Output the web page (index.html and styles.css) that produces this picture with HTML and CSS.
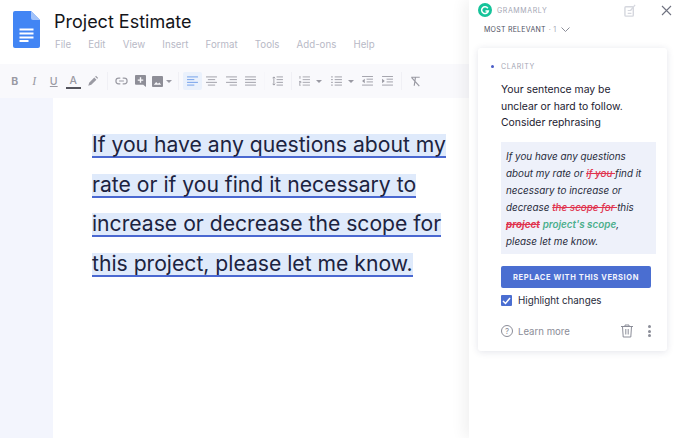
FILE: index.html
```html
<!DOCTYPE html>
<html lang="en">
<head>
<meta charset="utf-8">
<title>Project Estimate</title>
<link rel="stylesheet" href="styles.css">
</head>
<body>
<div class="app">
  <main class="editor">
    <header class="head">
      <svg class="doc-icon" width="27" height="37" viewBox="0 0 27 37"><path d="M2 0h16l9 9v26a2 2 0 0 1-2 2H2a2 2 0 0 1-2-2V2a2 2 0 0 1 2-2z" fill="#4285f4"/><path d="M18 0l9 9h-7a2 2 0 0 1-2-2z" fill="#a1c2fa"/><path d="M6.500 18.500h14M6.500 22.500h14M6.500 26.500h14M6.500 30h9" stroke="#fff" stroke-width="1.800" fill="none"/></svg>
      <div class="head-text">
        <h1 class="title">Project Estimate</h1>
        <nav class="menu"><span>File</span><span>Edit</span><span>View</span><span>Insert</span><span>Format</span><span>Tools</span><span>Add-ons</span><span>Help</span></nav>
      </div>
    </header>
    <div class="toolbar">
      <div class="group">
        <span class="tool glyph bold">B</span>
        <span class="tool glyph italic">I</span>
        <span class="tool glyph underline">U</span>
        <span class="tool glyph color">A</span>
        <span class="tool"><svg width="12" height="12" viewBox="0 0 14 14"><path d="M1.500 12.500l1-3.500 6-6 2.500 2.500-6 6zM9.500 2l1-1 2.500 2.500-1 1z" fill="#9a9aa3"/></svg></span>
      </div>
      <i class="sep"></i>
      <div class="group">
        <span class="tool"><svg width="13" height="8" viewBox="0 0 16 10"><path d="M6.500 1.500H4.500a3.500 3.500 0 0 0 0 7h2M9.500 1.500h2a3.500 3.500 0 0 1 0 7h-2M5 5h6" stroke="#9a9aa3" stroke-width="1.500" fill="none"/></svg></span>
        <span class="tool"><svg width="11" height="12" viewBox="0 0 12 13"><path d="M1 0h10a1 1 0 0 1 1 1v12l-3-2.500H1a1 1 0 0 1-1-1V1a1 1 0 0 1 1-1z" fill="#8e8e97"/><path d="M6 2.500v6M3 5.500h6" stroke="#f9f9fc" stroke-width="1.500"/></svg></span>
        <span class="tool wide"><svg width="11" height="11" viewBox="0 0 12 12"><rect width="12" height="12" rx="1" fill="#8e8e97"/><path d="M2 9.500l2.500-3 2 2 1.500-1.500 2 2.500z" fill="#f9f9fc"/></svg><b class="caret"></b></span>
      </div>
      <i class="sep"></i>
      <div class="group">
        <span class="tool active"><svg class="lines" viewBox="0 0 12 11"><path d="M0 1h12M0 4h8M0 7h12M0 10h8" stroke="#6b9be8"/></svg></span>
        <span class="tool"><svg class="lines" viewBox="0 0 12 11"><path d="M0 1h12M2 4h8M0 7h12M2 10h8"/></svg></span>
        <span class="tool"><svg class="lines" viewBox="0 0 12 11"><path d="M0 1h12M4 4h8M0 7h12M4 10h8"/></svg></span>
        <span class="tool"><svg class="lines" viewBox="0 0 12 11"><path d="M0 1h12M0 4h12M0 7h12M0 10h12"/></svg></span>
      </div>
      <i class="sep sep-faint"></i>
      <div class="group">
        <span class="tool"><svg class="lines" viewBox="0 0 12 11"><path d="M5 1h7M5 4h7M5 7h7M5 10h7M2 1v9M.5 2.500L2 1l1.500 1.500M.5 8.500L2 10l1.500-1.500"/></svg></span>
      </div>
      <i class="sep"></i>
      <div class="group">
        <span class="tool wide2"><svg class="lines" viewBox="0 0 12 11"><path d="M4 1h8M4 4h8M4 7h8M4 10h8M1 0v3M0 6h2v1.500H0V10h2" stroke-width=".9"/></svg><b class="caret"></b></span>
        <span class="tool wide3"><svg class="lines" viewBox="0 0 12 11"><path d="M4 1h8M4 4h8M4 7h8M4 10h8M0 1h2M0 4h2M0 7h2M0 10h2"/></svg><b class="caret"></b></span>
        <span class="tool"><svg class="lines" viewBox="0 0 12 11"><path d="M0 .5h12M5 3.500h7M5 6.500h7M0 10h12"/><path d="M3 3v5L0 5.500z" fill="#9a9aa3" stroke="none"/></svg></span>
        <span class="tool"><svg class="lines" viewBox="0 0 12 11"><path d="M0 .5h12M5 3.500h7M5 6.500h7M0 10h12"/><path d="M0 3v5l3-2.500z" fill="#9a9aa3" stroke="none"/></svg></span>
      </div>
      <i class="sep"></i>
      <div class="group">
        <span class="tool"><svg width="11" height="11" viewBox="0 0 13 13"><path d="M1.500 1.500h10M6.500 1.500L5 11.500M2 2l9 10" stroke="#9a9aa3" stroke-width="1.400" fill="none"/></svg></span>
      </div>
    </div>
    <div class="canvas">
      <div class="gutter"></div>
      <div class="page">
        <p class="sentence">
          <span class="hl">If you have any questions about my</span>
          <span class="hl">rate or if you find it necessary to</span>
          <span class="hl">increase or decrease the scope for</span>
          <span class="hl">this project, please let me know.</span>
        </p>
      </div>
    </div>
  </main>
  <aside class="panel">
    <div class="brand-row">
      <span class="logo"><svg width="14" height="14" viewBox="0 0 14 14"><circle cx="7" cy="7" r="7" fill="#15c39a"/><path d="M9.800 5.200A3.400 3.400 0 1 0 10.300 8H7.500" stroke="#fff" stroke-width="1.500" fill="none"/></svg></span>
      <span class="brand">GRAMMARLY</span>
      <svg class="goal" width="13" height="13" viewBox="0 0 14 14"><rect x="1" y="3" width="9" height="10" rx="1" fill="none" stroke="#d5d7de" stroke-width="1.500"/><path d="M4 7h4M4 10h4M7 7l5-6" stroke="#d5d7de" stroke-width="1.300" fill="none"/></svg>
      <svg class="close" width="11" height="11" viewBox="0 0 11 11"><path d="M1 1l9 9M10 1l-9 9" stroke="#6f7280" stroke-width="1.100"/></svg>
    </div>
    <div class="sort"><span>MOST RELEVANT</span><em>· 1</em><svg width="9" height="5" viewBox="0 0 9 5"><path d="M.5.500l4 4 4-4" stroke="#8b8d98" fill="none"/></svg></div>
    <section class="card">
      <div class="kind"><i class="dot"></i><span>CLARITY</span></div>
      <p class="message"><span class="line">Your sentence may be</span><span class="line">unclear or hard to follow.</span><span class="line">Consider rephrasing</span></p>
      <div class="rewrite">
        <span class="line">If you have any questions</span>
        <span class="line">about my rate or <del>if you </del>find it</span>
        <span class="line">necessary to increase or</span>
        <span class="line">decrease <del>the scope for </del>this</span>
        <span class="line"><del class="strong">project</del> <ins>project's scope</ins>,</span>
        <span class="line">please let me know.</span>
      </div>
      <button class="replace">REPLACE WITH THIS VERSION</button>
      <label class="check"><span class="box"><svg width="9" height="8" viewBox="0 0 9 8"><path d="M1 4l2.500 2.500L8 1" stroke="#fff" stroke-width="1.500" fill="none"/></svg></span>Highlight changes</label>
      <div class="foot">
        <span class="help">?</span><span class="learn">Learn more</span>
        <svg class="trash" width="12" height="14" viewBox="0 0 12 14"><path d="M0 2.500h12M4 2.500V1h4v1.500M1.500 2.500l.7 10.500h7.600l.7-10.500M4.800 5v5.500M7.200 5v5.500" stroke="#8b8d98" fill="none"/></svg>
        <span class="dots"><i></i><i></i><i></i></span>
      </div>
    </section>
  </aside>
</div>
</body>
</html>
```
FILE: styles.css
```css
* { box-sizing: border-box; }
html, body { margin: 0; height: 100%; }
body { font-family: Inter, "Liberation Sans", sans-serif; background: #fff; overflow: hidden; }
.app { display: flex; width: 674px; height: 438px; }

.editor { width: 469px; display: flex; flex-direction: column; flex: none; }
.head { height: 64px; display: flex; padding: 11px 0 0 13px; gap: 14px; }
.doc-icon { flex: none; }
.head-text { display: flex; flex-direction: column; }
.title { margin: 0; font-size: 18px; line-height: 22px; font-weight: 400; color: #14151a; }
.menu { display: flex; gap: 17.200px; margin: 5px 0 0 1px; font-size: 9.700px; line-height: 14px; color: #b8b9c6; }

.toolbar { height: 34px; background: #f9f9fc; display: flex; align-items: center; padding-left: 5px; }
.group { display: flex; align-items: center; }
.tool { width: 19.500px; height: 18px; display: flex; align-items: center; justify-content: center; flex: none; gap: 3px; }
.tool.wide { width: 23px; justify-content: flex-start; padding-left: 1px; }
.tool.wide2 { width: 32px; justify-content: flex-start; padding-left: 3px; gap: 6px; }
.tool.wide3 { width: 30px; justify-content: flex-start; padding-left: 3px; gap: 6px; }
.tool.active { background: #eaf1fc; border-radius: 2px; }
.glyph { font-size: 10.500px; color: #9a9aa3; font-weight: 500; }
.bold { font-weight: 700; }
.italic { font-style: italic; font-family: "Liberation Serif", serif; font-size: 12px; }
.underline { text-decoration: underline; }
.color { border-bottom: 2px solid #55555d; width: 15.500px; margin: 0 2px; height: 15px; }
.sep { width: 1px; height: 18px; background: #f0f0f5; margin: 0 4px; flex: none; }
.sep-faint { background: #f6f6fa; margin: 0 3px; }
.lines { width: 11px; height: 10px; stroke: #9a9aa3; stroke-width: 1; fill: none; }
.caret { width: 0; height: 0; border: 3px solid transparent; border-top: 3px solid #9a9aa3; border-bottom: 0; }

.canvas { flex: 1; display: flex; }
.gutter { width: 53px; background: #f3f5fd; flex: none; }
.page { flex: 1; padding: 36px 0 0 39px; }
.sentence { margin: 0; font-size: 21.150px; color: #1c2340; white-space: nowrap; display: flex; flex-direction: column; gap: 15.500px; align-items: flex-start; }
.hl { display: block; height: 24px; line-height: 22px; background: #dfeafb; border-bottom: 2px solid #4a68d1; }

.panel { flex: 1; background: #fff; box-shadow: -5px 0 14px rgba(0,0,0,.06); padding: 3px 2px 0 9px; }
.brand-row { display: flex; align-items: center; height: 15px; }
.brand { font-size: 7px; letter-spacing: .6px; color: #a4a6b4; margin-left: 5px; flex: 1; }
.goal { margin-right: 24px; }
.sort { display: flex; align-items: center; gap: 3px; margin: 5px 0 0 6px; height: 12px; font-size: 7px; letter-spacing: .25px; color: #4e5162; }
.sort em { font-style: normal; color: #a4a6b4; }
.sort svg { margin-left: 2px; }

.card { margin-top: 13px; width: 189px; height: 303px; border-radius: 3px; background: #fff; box-shadow: 0 1px 7px rgba(40,50,90,.13); padding: 13px 0 0 23px; }
.kind { display: flex; align-items: center; height: 10px; font-size: 7px; letter-spacing: .6px; color: #a4a6b4; position: relative; }
.dot { position: absolute; left: -10px; width: 3px; height: 3px; border-radius: 50%; background: #4a5cc6; }
.line { display: block; }
.message { margin: 11px 0 0; font-size: 10.400px; line-height: 16.700px; color: #1c2130; }
.rewrite { margin: 10px 0 0; width: 155px; height: 112px; background: #eef1fa; padding: 6px 5px 0; font-size: 9.850px; line-height: 17px; font-style: italic; color: #272b3a; white-space: nowrap; }
del { color: #e0344f; font-weight: 500; }
del.strong { font-weight: 700; }
ins { color: #4caf8c; text-decoration: none; font-weight: 600; }
.replace { display: block; margin: 12px 0 0; width: 150px; height: 22px; border: 0; border-radius: 2px; background: #4a6ed1; color: #f2f4fd; font: 700 7.500px Inter, sans-serif; letter-spacing: .6px; padding: 0; }
.check { display: flex; align-items: center; gap: 6px; margin-top: 5px; height: 15px; font-size: 9.800px; color: #272b3a; }
.box { width: 11px; height: 11px; background: #4a6ed1; border-radius: 1px; display: flex; align-items: center; justify-content: center; }
.foot { display: flex; align-items: center; margin-top: 15px; height: 16px; }
.help { width: 12px; height: 12px; border: 1px solid #8b8d98; border-radius: 50%; font-size: 8px; line-height: 10px; text-align: center; color: #8b8d98; flex: none; }
.learn { margin-left: 5px; font-size: 9.600px; color: #8b8d98; flex: 0 0 103px; }
.trash { flex: none; }
.dots { display: flex; flex-direction: column; gap: 1.500px; margin-left: 15px; }
.dots i { width: 3px; height: 3px; border-radius: 50%; background: #8b8d98; }
```
